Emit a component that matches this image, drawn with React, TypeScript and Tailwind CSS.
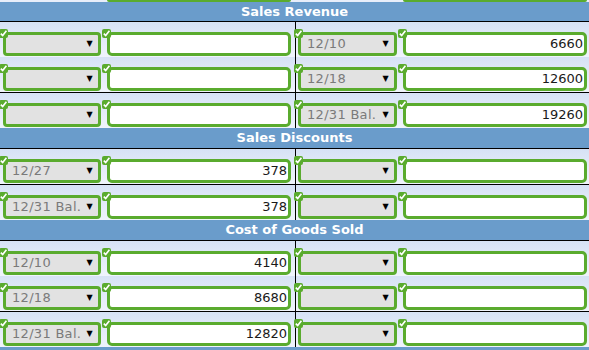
import React from "react";

const GREEN = "border-[#5aab2e]";

function Check({ className }: { className: string }) {
  return (
    <svg
      className={"absolute z-10 " + className}
      width="9"
      height="9"
      viewBox="0 0 9 9"
    >
      <rect x="0" y="0" width="9" height="9" rx="2" fill="#5aab2e" />
      <polyline
        points="1.8,4.6 3.7,6.6 7.4,1.8"
        fill="none"
        stroke="#ffffff"
        strokeWidth="1.6"
      />
    </svg>
  );
}

function Select({ value, w }: { value: string; w: string }) {
  return (
    <div className={"relative h-[24px] shrink-0 " + w}>
      <Check className="-left-[4px] -top-[3px]" />
      <div
        className={
          "flex h-full items-center justify-between rounded-[4px] border-[3px] bg-[#e2e2e2] pl-[6px] pr-[5px] text-[13px] tracking-[0.3px] text-[#7a7a7a] " +
          GREEN
        }
      >
        <span className="whitespace-nowrap">{value}</span>
        <span className="text-[8px] leading-none text-black">▼</span>
      </div>
    </div>
  );
}

function Input({ value }: { value: string }) {
  return (
    <div className="relative h-[24px] w-[184px] shrink-0">
      <Check className="-left-[5px] -top-[3px]" />
      <div
        className={
          "flex h-full items-center justify-end rounded-[5px] border-[3px] bg-white pr-[1px] text-[13px] text-[#1a1a1a] " +
          GREEN
        }
      >
        {value}
      </div>
    </div>
  );
}

type RowData = [string, string, string, string];

function Row({ d, line }: { d: RowData; line?: boolean }) {
  return (
    <div
      className={
        "flex h-[35px] bg-gradient-to-b from-[#d6e2f5] to-[#f0f4fc] " +
        (line ? "border-b border-black h-[36px]" : "")
      }
    >
      <div className="flex w-[296px] shrink-0 border-r border-black pl-[3px] pt-[10px]">
        <Select value={d[0]} w="w-[98px]" />
        <div className="ml-[6px]">
          <Input value={d[1]} />
        </div>
      </div>
      <div className="flex pl-[2px] pt-[10px]">
        <Select value={d[2]} w="w-[99px]" />
        <div className="ml-[6px]">
          <Input value={d[3]} />
        </div>
      </div>
    </div>
  );
}

function Header({ title, h }: { title: string; h: string }) {
  return (
    <div
      className={
        "flex items-center justify-center border-b border-black bg-[#6a9ccb] text-[13px] font-bold text-white " +
        h
      }
    >
      {title}
    </div>
  );
}

export default function App() {
  return (
    <div
      className="h-[350px] w-[589px] overflow-hidden bg-[#6a9ccb]"
      style={{ fontFamily: '"DejaVu Sans", Verdana, sans-serif' }}
    >
      <div className="relative h-[2px] bg-[#e8eefa]">
        <div className="absolute left-[107px] top-0 h-[2px] w-[184px] rounded-b-[3px] bg-[#5aab2e]" />
        <div className="absolute left-[403px] top-0 h-[2px] w-[184px] rounded-b-[3px] bg-[#5aab2e]" />
      </div>
      <Header title="Sales Revenue" h="h-[20px]" />
      <Row d={["", "", "12/10", "6660"]} />
      <Row d={["", "", "12/18", "12600"]} line />
      <Row d={["", "", "12/31 Bal.", "19260"]} />
      <Header title="Sales Discounts" h="h-[21px]" />
      <Row d={["12/27", "378", "", ""]} line />
      <Row d={["12/31 Bal.", "378", "", ""]} />
      <Header title="Cost of Goods Sold" h="h-[21px]" />
      <Row d={["12/10", "4140", "", ""]} />
      <Row d={["12/18", "8680", "", ""]} line />
      <Row d={["12/31 Bal.", "12820", "", ""]} />
    </div>
  );
}
